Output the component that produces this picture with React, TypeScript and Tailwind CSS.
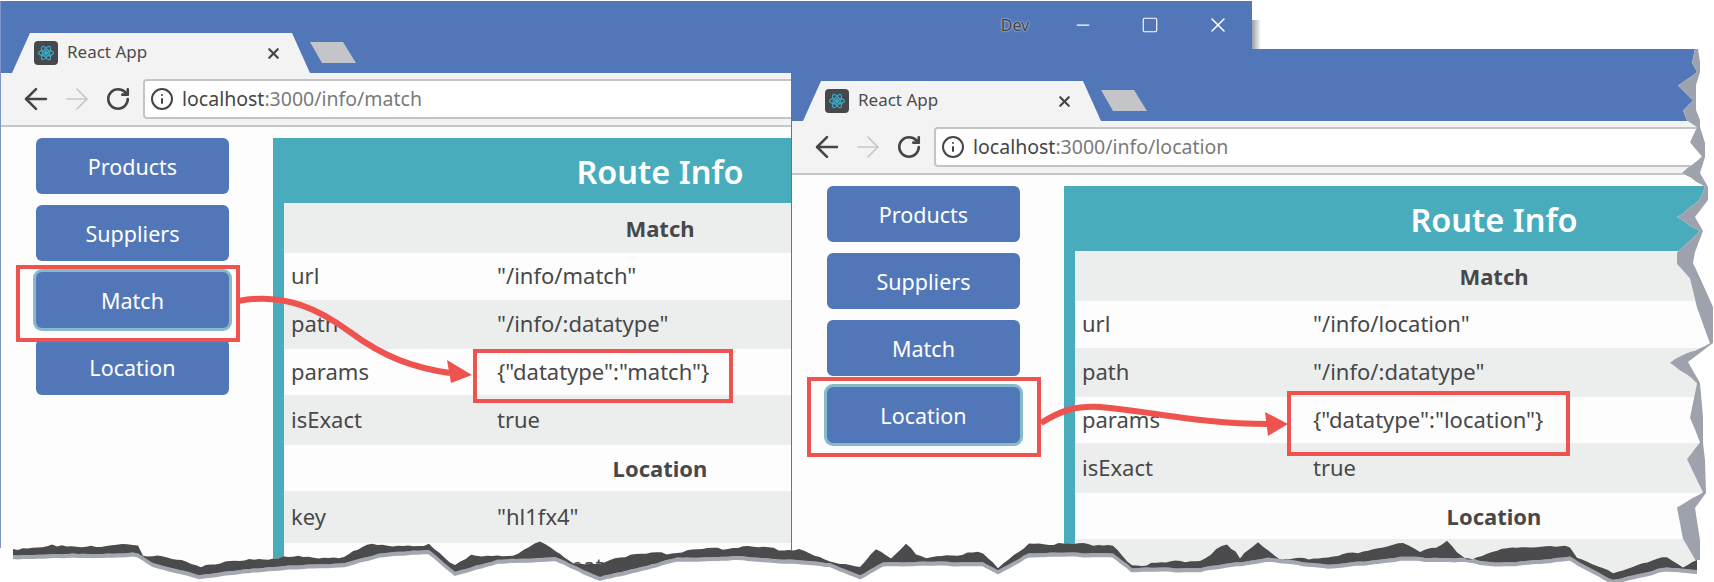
import React from 'react';
import { ArrowLeft, ArrowRight, Info, Minus, RotateCw, Square, X } from 'lucide-react';

type Point = [number, number];

interface WindowProps {
  url: string;
  className: string;
  panelClass: string;
  labelClass: string;
  activeIndex: number;
  rows: { label: string; value: string; height: string; shaded: boolean; heading?: boolean }[];
  controls?: boolean;
}

const navItems = ['Products', 'Suppliers', 'Match', 'Location'];

const tearTop: Point[] = [
  [13, 549], [57, 545], [96, 547], [122, 543], [138, 545], [143, 555], [172, 558], [201, 567], [230, 562],
  [283, 557], [344, 557], [367, 545], [429, 545], [455, 565], [471, 555], [513, 555], [540, 540], [551, 547], [574, 563],
  [600, 563], [615, 557], [677, 552], [738, 547], [799, 550], [830, 563], [860, 568], [876, 550], [891, 560], [906, 545],
  [921, 557], [983, 552], [998, 567], [1029, 543], [1113, 545], [1132, 565], [1200, 560], [1227, 543], [1240, 557],
  [1258, 543], [1280, 560], [1333, 557], [1403, 543], [1420, 553], [1447, 542], [1467, 560], [1507, 547], [1570, 547],
  [1577, 557], [1613, 573], [1667, 557], [1683, 567], [1697, 560],
];

const tearBottom: Point[] = [
  [13, 555], [138, 553], [153, 563], [199, 575], [268, 567], [344, 563], [383, 553], [429, 550], [455, 572],
  [497, 560], [555, 557], [600, 577], [677, 558], [738, 556], [830, 563], [860, 575], [883, 562], [983, 562], [998, 570],
  [1029, 553], [1113, 553], [1132, 568], [1200, 568], [1267, 558], [1333, 565], [1400, 557], [1460, 558], [1500, 563],
  [1570, 557], [1613, 580], [1667, 567], [1697, 570],
];

const tearRight: Point[] = [
  [1695, 49], [1692, 62], [1697, 72], [1678, 85], [1693, 100], [1683, 110], [1687, 120], [1697, 127], [1690, 143],
  [1702, 157], [1682, 173], [1705, 187], [1700, 200], [1677, 217], [1700, 231], [1677, 252], [1677, 263], [1690, 278],
  [1697, 307], [1710, 343], [1670, 362], [1697, 383], [1690, 417], [1700, 443], [1687, 460], [1703, 493], [1677, 508],
  [1683, 540], [1697, 563],
];

// small jitter so the torn edge doesn't look like straight segments
function roughen(points: Point[], amount: number): Point[] {
  const out: Point[] = [];
  points.forEach((p, i) => {
    const next = points[i + 1];
    if (!next) {
      out.push(p);
      return;
    }
    const steps = Math.max(1, Math.round(Math.abs(next[0] - p[0]) / 5));
    for (let s = 0; s < steps; s++) {
      const t = s / steps;
      const wobble = (Math.sin((i + s) * 12.9898) * 43758.5453) % 1;
      out.push([p[0] + (next[0] - p[0]) * t, p[1] + (next[1] - p[1]) * t + wobble * amount]);
    }
  });
  return out;
}

const toPoints = (pts: Point[]) => pts.map((p) => `${p[0].toFixed(1)},${p[1].toFixed(1)}`).join(' ');

function ReactIcon() {
  return (
    <span className="w-6 h-6 rounded-sm bg-[#47484c] flex items-center justify-center">
      <svg width="18" height="18" viewBox="0 0 24 24" fill="none" stroke="#39a9c9" strokeWidth="1.6">
        <circle cx="12" cy="12" r="2" fill="#39a9c9" />
        <ellipse cx="12" cy="12" rx="10" ry="4" />
        <ellipse cx="12" cy="12" rx="10" ry="4" transform="rotate(60 12 12)" />
        <ellipse cx="12" cy="12" rx="10" ry="4" transform="rotate(120 12 12)" />
      </svg>
    </span>
  );
}

function BrowserWindow({ url, className, panelClass, labelClass, activeIndex, rows, controls }: WindowProps) {
  return (
    <div className={`absolute flex flex-col overflow-hidden bg-[#fdfdfd] ${className}`}>
      <div className="h-[72px] shrink-0 flex bg-[#5277b9]">
        <div className="flex items-end pl-[11px]">
          <div className="w-[298px] h-10 pl-[22px] pr-6 flex items-center bg-[#f3f3f3] [clip-path:polygon(0_100%,18px_0,280px_0,100%_100%)]">
            <ReactIcon />
            <span className="ml-[9px] pb-0.5 text-[17px] text-[#4b4b4b]">React App</span>
            <X size={17} strokeWidth={3} className="ml-auto mr-1 text-[#444]" />
          </div>
          <div className="w-[46px] h-[21px] mb-[10px] bg-[#c4c5c8] [clip-path:polygon(0_0,33px_0,100%_100%,12px_100%)]" />
        </div>
        {controls && (
          <div className="ml-auto h-12 flex items-center text-white">
            <span className="w-[68px] text-center text-base text-[#3f3f3f] [text-shadow:0_0_2px_#fff]">Dev</span>
            <span className="w-[67px] flex justify-center"><Minus size={20} strokeWidth={1.5} /></span>
            <span className="w-[67px] flex justify-center"><Square size={18} strokeWidth={1.5} /></span>
            <span className="w-[69px] flex justify-center"><X size={24} strokeWidth={1.5} /></span>
          </div>
        )}
      </div>
      <div className="h-[54px] shrink-0 flex items-center pl-[14px] pr-2 bg-[#f3f3f3] border-b-2 border-[#c3c6cb]">
        <span className="w-[41px] flex justify-center text-[#454545]"><ArrowLeft size={34} strokeWidth={1.8} /></span>
        <span className="w-[41px] flex justify-center text-[#c5c8cc]"><ArrowRight size={34} strokeWidth={1.2} /></span>
        <span className="w-[41px] flex justify-center text-[#454545]"><RotateCw size={26} strokeWidth={2.4} /></span>
        <div className="ml-[5px] flex-1 h-10 flex items-center pl-[5px] bg-white border-2 border-[#c4c4c4] rounded-sm">
          <Info size={24} strokeWidth={2} className="text-[#454545]" />
          <span className="ml-2 text-[19.5px] text-[#454545]">
            localhost<span className="text-[#7a7a7a]">:3000{url}</span>
          </span>
        </div>
      </div>
      <div className="flex flex-1 pt-[11px] pl-[35px]">
        <div className="w-[193px] shrink-0 flex flex-col gap-[11px]">
          {navItems.map((item, i) => (
            <div
              key={item}
              className={`h-[56px] pt-0.5 flex items-center justify-center rounded-md bg-[#5277b9] text-[21.5px] text-white ${
                i === activeIndex ? 'ring-[3px] ring-[#86bcc9]' : ''
              }`}
            >
              {item}
            </div>
          ))}
        </div>
        <div className={`ml-[44px] shrink-0 px-[11px] bg-[#48acbd] ${panelClass}`}>
          <div className="h-[65px] pt-1 flex items-center justify-center text-[32.5px] font-semibold text-white">Route Info</div>
          <div className="flex flex-col">
            {rows.map((row, i) => (
              <div
                key={i}
                className={`shrink-0 flex items-center text-[22px] text-[#484848] ${row.height} ${row.shaded ? 'bg-[#eceeee]' : 'bg-[#fdfdfd]'} ${
                  row.heading ? 'justify-center font-bold' : 'pl-[7px] pb-0.5'
                }`}
              >
                {row.heading ? row.label : <><span className={`shrink-0 ${labelClass}`}>{row.label}</span><span>{row.value}</span></>}
              </div>
            ))}
          </div>
        </div>
      </div>
    </div>
  );
}

function makeRows(url: string, datatype: string, key: string, last: string, lastValue: string) {
  return [
    { label: 'Match', value: '', height: 'h-[50px]', shaded: true, heading: true },
    { label: 'url', value: `"${url}"`, height: 'h-[47px]', shaded: false },
    { label: 'path', value: '"/info/:datatype"', height: 'h-[49px]', shaded: true },
    { label: 'params', value: `{"datatype":"${datatype}"}`, height: 'h-[46px]', shaded: false },
    { label: 'isExact', value: 'true', height: 'h-[50px]', shaded: true },
    { label: 'Location', value: '', height: 'h-[46px]', shaded: false, heading: true },
    { label: key ? 'key' : '', value: key, height: 'h-[52px]', shaded: true },
    { label: last, value: lastValue, height: 'h-[46px]', shaded: false },
  ];
}

function PaperTear() {
  const top = roughen(tearTop, 1.6);
  const bottom = roughen(tearBottom, 0.5);
  const right = roughen(tearRight, 1);
  const shadow = bottom.map((p) => [p[0], p[1] + 2] as Point);
  // fringe on the right: notches fill up towards the neighbouring peaks
  const fringe = tearRight.map((p, i) => {
    const prev = tearRight[i - 1] ?? p;
    const next = tearRight[i + 1] ?? p;
    return [Math.min(Math.max(prev[0], p[0], next[0]) + 3, p[0] + 18), p[1]] as Point;
  });
  return (
    <svg className="absolute inset-0 pointer-events-none" width="1714" height="582" viewBox="0 0 1714 582">
      <polygon points={`${toPoints(right)} 1697,582 1714,582 1714,49`} fill="#ffffff" />
      <polygon points={`${toPoints(right)} ${toPoints([...fringe].reverse())}`} fill="#9ea2ad" />
      <polygon points={`0,548 ${toPoints(top)} 1714,560 1714,582 0,582`} fill="#ffffff" />
      <polyline points={toPoints(shadow)} fill="none" stroke="#a3a7b1" strokeWidth="4" />
      <polygon points={`${toPoints(top)} ${toPoints([...bottom].reverse())}`} fill="#4b4b4d" />
    </svg>
  );
}

function Callouts() {
  return (
    <>
      <div className="absolute left-4 top-[265px] w-[224px] h-[77px] border-4 border-[#ee534f]" />
      <div className="absolute left-[473px] top-[349px] w-[260px] h-[54px] border-4 border-[#ee534f]" />
      <div className="absolute left-[807px] top-[377px] w-[234px] h-[80px] border-4 border-[#ee534f]" />
      <div className="absolute left-[1287px] top-[391px] w-[283px] h-[65px] border-4 border-[#ee534f]" />
      <svg className="absolute inset-0 pointer-events-none" width="1714" height="582" viewBox="0 0 1714 582">
        <path d="M238 301 C285 292 320 310 350 332 C385 358 415 368 450 373" fill="none" stroke="#ee534f" strokeWidth="6" />
        <polygon points="472,375 447,360 451,383" fill="#ee534f" />
        <path d="M1041 423 C1062 410 1075 406 1100 407 C1150 411 1200 424 1268 424" fill="none" stroke="#ee534f" strokeWidth="6" />
        <polygon points="1288,424 1265,412 1268,436" fill="#ee534f" />
      </svg>
    </>
  );
}

export default function App() {
  return (
    <div className="relative w-[1714px] h-[582px] overflow-hidden bg-white font-['Noto_Sans',sans-serif]">
      <div className="absolute left-[1252px] top-5 w-[9px] h-[29px] bg-gradient-to-r from-[#9a9ea8] to-white" />
      <BrowserWindow
        url="/info/match"
        className="left-0 top-px w-[1252px] h-[590px] border-l border-[#7d95c8]"
        panelClass="w-[774px]"
        labelClass="w-[206px]"
        activeIndex={2}
        controls
        rows={makeRows('/info/match', 'match', '"hl1fx4"', 'pathname', '"/info/match"')}
      />
      <BrowserWindow
        url="/info/location"
        className="left-[791px] top-[49px] w-[1140px] h-[533px] border-l border-[#5277b9]"
        panelClass="w-[860px]"
        labelClass="w-[231px]"
        activeIndex={3}
        rows={makeRows('/info/location', 'location', '', '', '')}
      />
      <Callouts />
      <PaperTear />
    </div>
  );
}
